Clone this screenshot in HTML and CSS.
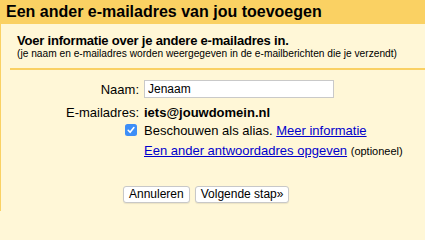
FILE: index.html
```html
<!DOCTYPE html>
<html lang="nl">
<head>
<meta charset="utf-8">
<title>Een ander e-mailadres van jou toevoegen</title>
<link rel="stylesheet" href="styles.css">
</head>
<body>
<div class="dialog">
  <div class="titlebar">Een ander e-mailadres van jou toevoegen</div>
  <div class="panel">
    <div class="intro">
      <div class="intro-title">Voer informatie over je andere e-mailadres in.</div>
      <div class="intro-sub">(je naam en e-mailadres worden weergegeven in de e-mailberichten die je verzendt)</div>
    </div>
    <div class="form">
      <div class="row">
        <div class="lbl">Naam:</div>
        <div class="val"><input class="field" type="text" value="Jenaam"></div>
      </div>
      <div class="row row-email">
        <div class="lbl">E-mailadres:</div>
        <div class="val email">iets@jouwdomein.nl</div>
      </div>
      <div class="row row-alias">
        <div class="lbl"><span class="check"><svg width="12" height="12" viewBox="0 0 12 12"><rect x="0" y="0" width="12" height="12" rx="2.5" fill="#3d8ef7"/><path d="M3.2 6.3 L5.1 8.3 L8.9 3.6" fill="none" stroke="#fff" stroke-width="1.6" stroke-linecap="round" stroke-linejoin="round"/></svg></span></div>
        <div class="val">Beschouwen als alias. <a class="link" href="#">Meer informatie</a></div>
      </div>
      <div class="row row-reply">
        <div class="lbl"></div>
        <div class="val"><a class="link" href="#">Een ander antwoordadres opgeven</a> <span class="opt">(optioneel)</span></div>
      </div>
    </div>
    <div class="actions">
      <button class="btn" type="button">Annuleren</button>
      <button class="btn" type="button">Volgende stap»</button>
    </div>
  </div>
</div>
</body>
</html>
```
FILE: styles.css
```css
html, body {
  margin: 0;
  padding: 0;
  background: #fff7d7;
}
body {
  font-family: "Liberation Sans", Arial, sans-serif;
  color: #000;
  width: 425px;
  height: 211px;
  overflow: hidden;
}
.dialog {
  height: 211px;
  display: flex;
  flex-direction: column;
}
.titlebar {
  background: #fad163;
  height: 24px;
  line-height: 24px;
  padding-left: 6px;
  font-size: 16px;
  font-weight: bold;
  white-space: nowrap;
}
.panel {
  flex: 1;
  background: #fff7d7;
  border-left: 1px solid #fad163;
}
.intro {
  margin-left: 9px;
  padding: 10px 0 8px 7px;
  border-bottom: 2px solid #fad163;
}
.intro-title {
  font-size: 13px;
  font-weight: bold;
  line-height: 14px;
  letter-spacing: -0.2px;
  white-space: nowrap;
}
.intro-sub {
  font-size: 10.2px;
  line-height: 12px;
  white-space: nowrap;
}
.form {
  margin-top: 10px;
  font-size: 13px;
}
.row {
  display: flex;
  align-items: center;
  height: 18px;
}
.row-email { margin-top: 5px; }
.row-reply { margin-top: 2px; }
.lbl {
  width: 138px;
  padding-right: 5px;
  display: flex;
  justify-content: flex-end;
}
.val {
  white-space: nowrap;
}
.field {
  box-sizing: border-box;
  width: 190px;
  height: 18px;
  margin: 0;
  padding: 0 3px;
  border: 1px solid #c9c9c9;
  background: #fff;
  font-family: "Liberation Sans", Arial, sans-serif;
  font-size: 12px;
  color: #000;
}
.email {
  font-weight: bold;
}
.check {
  display: flex;
  margin-right: 2px;
}
.link {
  color: #0000cc;
  text-decoration: underline;
}
.opt {
  font-size: 11px;
}
.actions {
  margin-top: 27px;
  padding-left: 122px;
  display: flex;
  gap: 5px;
}
.btn {
  height: 17px;
  padding: 0 5px;
  margin: 0;
  border: 1px solid #c8c8c8;
  border-radius: 3px;
  background: #fff;
  font-family: "Liberation Sans", Arial, sans-serif;
  font-size: 12px;
  color: #000;
  line-height: 15px;
  box-shadow: 0 1px 1px rgba(0,0,0,0.08);
}
```
